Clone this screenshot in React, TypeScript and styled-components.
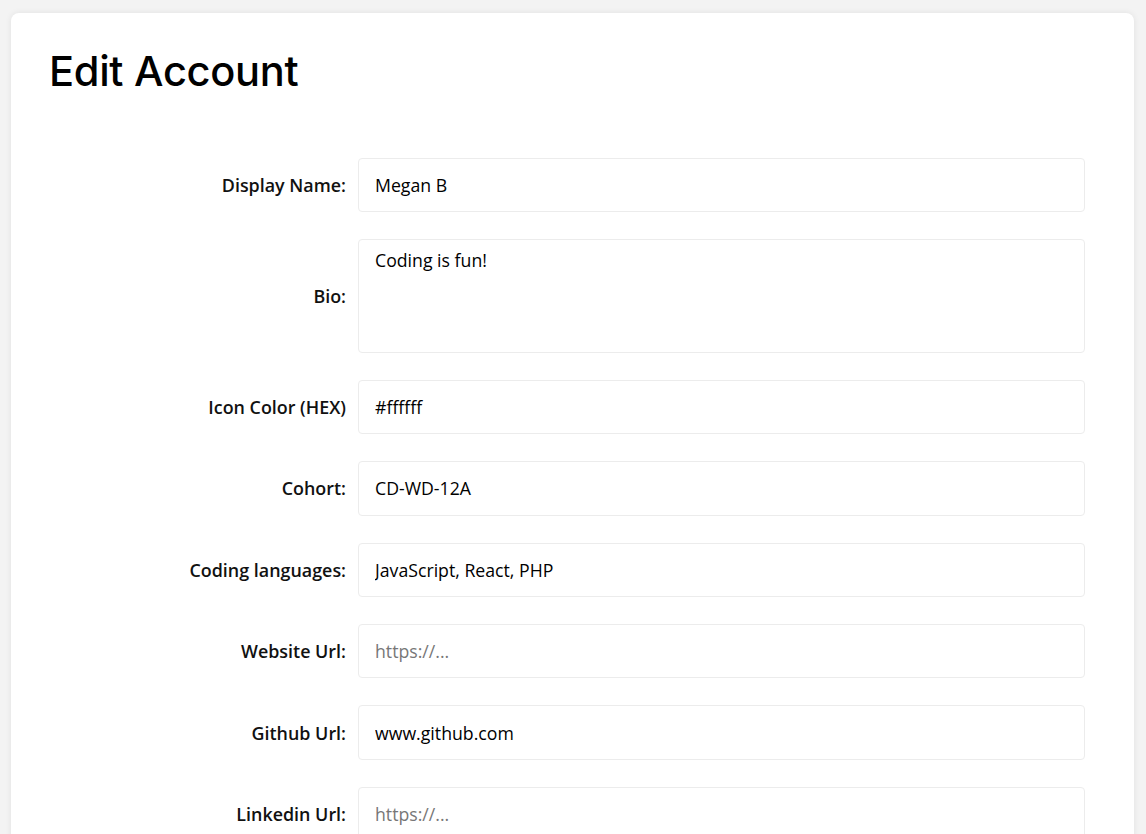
import React from "react";
import styled, { createGlobalStyle } from "styled-components";

const Global = createGlobalStyle`
  html, body { margin: 0; padding: 0; background: #f3f3f3; }
  body { font-family: "Open Sans", "Noto Sans", sans-serif; color: #111; }
  * { box-sizing: border-box; }
`;

const Page = styled.div`
  padding: 13px 12px 0 11px;
  height: 834px;
  overflow: hidden;
`;

const Card = styled.div`
  background: #fff;
  border-radius: 8px;
  box-shadow: 0 0 6px rgba(0, 0, 0, 0.08);
  padding: 34px 38px 60px 38px;
  min-height: 900px;
`;

const Title = styled.h1`
  font-family: "Inter", sans-serif;
  font-weight: 500;
  font-size: 41.6px;
  letter-spacing: -0.3px;
  line-height: 48px;
  margin: 0 0 63px 0;
  color: #000;
`;

const Form = styled.form`
  display: grid;
  grid-template-columns: 1fr 727px;
  column-gap: 12px;
  row-gap: 27.2px;
  margin-right: 11px;
  align-items: center;
`;

const Label = styled.label`
  text-align: right;
  font-size: 17.9px;
  font-weight: 600;
  color: #111;
`;

const fieldBase = `
  width: 100%;
  border: 1px solid #ececec;
  border-radius: 4px;
  padding: 0 16px;
  font-family: "Open Sans", "Noto Sans", sans-serif;
  font-size: 17.7px;
  color: #000;
  background: #fff;
  outline: none;
  &::placeholder { color: #777; }
`;

const Input = styled.input`
  ${fieldBase}
  height: 54.2px;
`;

const TextArea = styled.textarea`
  ${fieldBase}
  height: 113.4px;
  padding-top: 8px;
  resize: none;
  display: block;
`;

const fields: { label: string; value?: string; placeholder?: string; multi?: boolean }[] = [
  { label: "Display Name:", value: "Megan B" },
  { label: "Bio:", value: "Coding is fun!", multi: true },
  { label: "Icon Color (HEX)", value: "#ffffff" },
  { label: "Cohort:", value: "CD-WD-12A" },
  { label: "Coding languages:", value: "JavaScript, React, PHP" },
  { label: "Website Url:", placeholder: "https://..." },
  { label: "Github Url:", value: "www.github.com" },
  { label: "Linkedin Url:", placeholder: "https://..." },
];

export default function App() {
  return (
    <>
      <Global />
      <Page>
        <Card>
          <Title>Edit Account</Title>
          <Form onSubmit={(e) => e.preventDefault()}>
            {fields.map((f, i) => (
              <React.Fragment key={i}>
                <Label htmlFor={`f${i}`}>{f.label}</Label>
                {f.multi ? (
                  <TextArea id={`f${i}`} defaultValue={f.value} />
                ) : (
                  <Input id={`f${i}`} defaultValue={f.value} placeholder={f.placeholder} />
                )}
              </React.Fragment>
            ))}
          </Form>
        </Card>
      </Page>
    </>
  );
}
